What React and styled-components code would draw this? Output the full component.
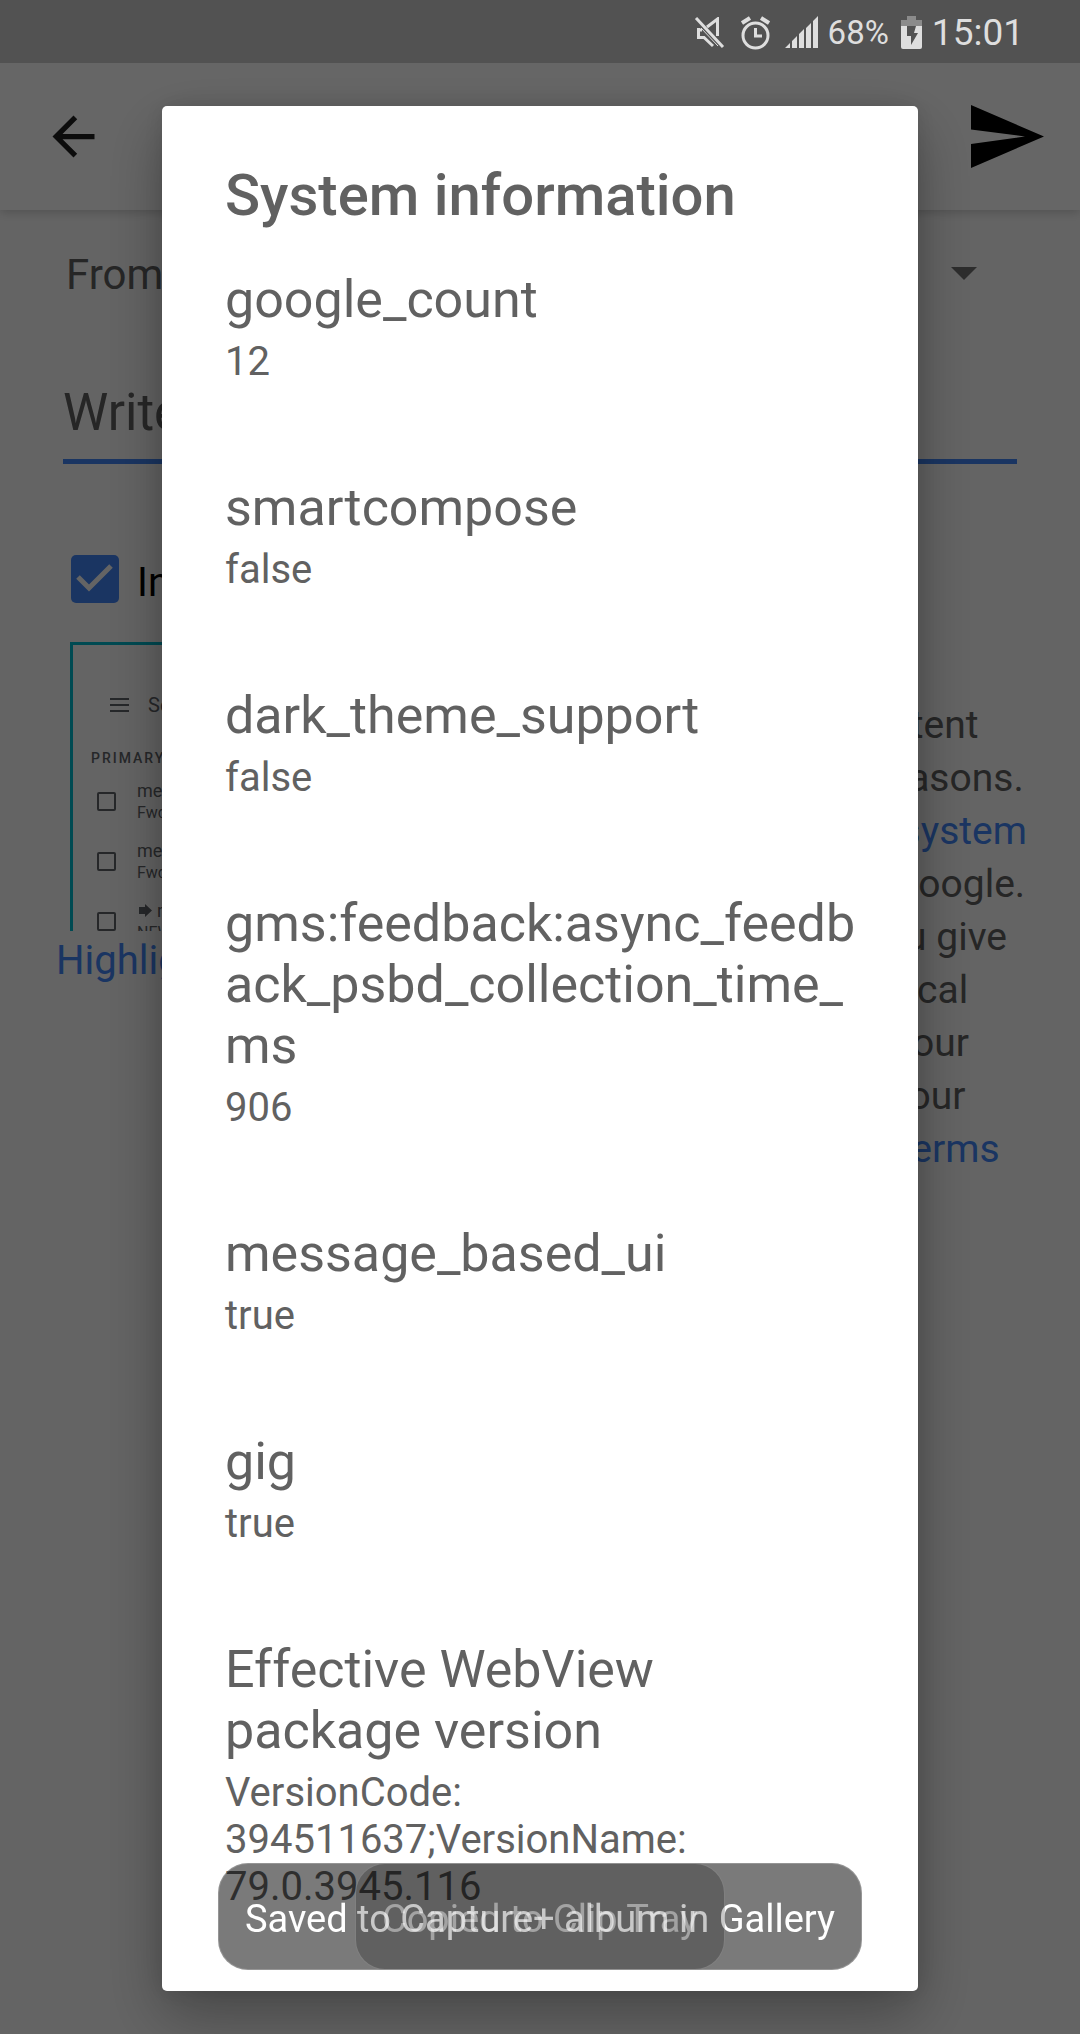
import React from "react";
import styled, { createGlobalStyle } from "styled-components";

const blue = "#4285f4";

const GlobalStyle = createGlobalStyle`
  *, *::before, *::after { box-sizing: border-box; }
  body { margin: 0; background: #fafafa; }
  body, button, input, textarea, select { font-family: Roboto, "Noto Sans", sans-serif; }
`;

const Screen = styled.div`
  min-height: 100vh;
  background: #fafafa;
`;

const StatusBar = styled.header`
  position: relative;
  z-index: 3;
  display: flex;
  align-items: center;
  justify-content: flex-end;
  height: 63px;
  padding: 2px 56px 0 0;
  background: #525252;
  color: #dedede;
  line-height: 42px;
`;

const StatusIcon = styled.svg`
  display: block;
  flex: none;
  margin-right: ${(p) => p.$gap}px;
`;

const Battery = styled.span`
  font-size: 33px;
  margin-right: 12px;
`;

const Clock = styled.time`
  font-size: 37px;
`;

const Toolbar = styled.div`
  position: relative;
  display: flex;
  align-items: center;
  justify-content: space-between;
  height: 147px;
  padding: 0 36px 0 42px;
  background: #ffffff;
  box-shadow: 0 2px 10px rgba(0, 0, 0, 0.2);
`;

const IconButton = styled.button`
  display: block;
  padding: 0;
  border: 0;
  background: none;
  color: ${(p) => p.$color};
  svg { display: block; }
`;

const Form = styled.main`
  display: flex;
  flex-direction: column;
`;

const FromRow = styled.div`
  display: flex;
  align-items: center;
  height: 126px;
  padding: 0 103px 0 66px;
`;

const FromSelect = styled.select`
  flex: 1;
  min-width: 0;
  padding: 4px 0 0;
  border: 0;
  appearance: none;
  background: transparent;
  color: #606060;
  font-size: 42px;
  line-height: 50px;
`;

const Caret = styled.span`
  width: 0;
  height: 0;
  border: 13px solid transparent;
  border-top-color: #707070;
  border-bottom-width: 0;
`;

const Feedback = styled.textarea`
  display: block;
  height: 94px;
  margin: 34px 63px 0;
  padding: 13px 0 0;
  border: 0;
  border-bottom: 5px solid ${blue};
  background: transparent;
  font-size: 51px;
  line-height: 60px;
  resize: none;
  overflow: hidden;
  &::placeholder { color: #606060; opacity: 1; }
`;

const CheckRow = styled.label`
  display: flex;
  align-items: center;
  gap: 18px;
  margin: 91px 63px 0 71px;
  color: #000;
  font-size: 40px;
  line-height: 48px;
`;

const CheckText = styled.span`
  padding-top: 4px;
  margin-bottom: -4px;
`;

const Tick = styled.span`
  position: relative;
  width: 48px;
  height: 48px;
  svg { position: absolute; inset: 0; pointer-events: none; }
`;

const TickInput = styled.input`
  appearance: none;
  display: block;
  width: 48px;
  height: 48px;
  margin: 0;
  border-radius: 5px;
  background: ${blue};
`;

const Details = styled.section`
  display: flex;
  align-items: flex-start;
  margin: 39px 50px 0 56px;
`;

const Preview = styled.div`
  flex: 0 0 52%;
  display: flex;
  flex-direction: column;
  align-items: flex-start;
`;

const Shot = styled.div`
  width: 460px;
  height: 289px;
  margin-left: 14px;
  padding-top: 42px;
  border: 3px solid #00b8cc;
  border-bottom: 0;
  overflow: hidden;
  color: #5f6368;
`;

const ShotSearch = styled.div`
  display: flex;
  align-items: center;
  gap: 19px;
  padding-left: 37px;
  font-size: 20px;
  line-height: 36px;
`;

const ShotHeading = styled.div`
  padding: 25px 0 9px 18px;
  font-size: 14px;
  font-weight: 500;
  line-height: 20px;
  letter-spacing: 2px;
`;

const ShotMail = styled.div`
  display: flex;
  gap: 21px;
  height: 60px;
  padding: 3px 0 0 24px;
`;

const ShotBox = styled.span`
  width: 19px;
  height: 19px;
  margin-top: 12px;
  border: 2px solid #5f6368;
  border-radius: 2px;
`;

const ShotText = styled.div`
  font-size: ${(p) => (p.$small ? 16 : 18)}px;
  line-height: 22px;
  white-space: nowrap;
`;

const Link = styled.a`
  color: ${blue};
  text-decoration: none;
`;

const HighlightLink = styled(Link)`
  margin-top: 5px;
  font-size: 40px;
  line-height: 50px;
`;

const Legal = styled.p`
  flex: 1;
  margin: 4px 0 0;
  padding-left: 4px;
  color: #606060;
  font-size: 39px;
  line-height: 53px;
  white-space: nowrap;
`;

const Line = styled.span`
  display: block;
`;

const Scrim = styled.div`
  position: fixed;
  inset: 0;
  z-index: 2;
  display: flex;
  justify-content: center;
  padding: 106px 15% 43px;
  background: rgba(0, 0, 0, 0.6);
`;

const Dialog = styled.div`
  flex: 1;
  padding: 55px 58px 0 63px;
  border-radius: 5px;
  background: #fff;
  color: #616161;
  box-shadow: 0 24px 60px rgba(0, 0, 0, 0.3), 0 0 24px rgba(0, 0, 0, 0.12);
  overflow: auto;
  scrollbar-width: none;
`;

const Title = styled.h1`
  margin: 0 0 40px;
  font-size: 58px;
  font-weight: 500;
  line-height: 68px;
`;

const Entries = styled.dl`
  margin: 0;
`;

const Entry = styled.div`
  padding-bottom: 92px;
`;

const Key = styled.dt`
  font-size: 52px;
  line-height: 61px;
  overflow-wrap: anywhere;
`;

const Value = styled.dd`
  margin: 8px 0 0;
  font-size: 40px;
  line-height: 47px;
`;

const ToastLayer = styled.div`
  position: fixed;
  inset: auto 0 64px;
  z-index: 4;
  display: grid;
  justify-items: center;
`;

const Toast = styled.div`
  grid-area: 1 / 1;
  padding: 33px 26px 28px;
  border: 1px solid rgba(255, 255, 255, 0.2);
  border-radius: 30px;
  background: rgba(0, 0, 0, ${(p) => (p.$fading ? 0.215 : 0.52)});
  color: rgba(255, 255, 255, ${(p) => (p.$fading ? 0.42 : 1)});
  font-size: 38px;
  line-height: 44px;
  white-space: nowrap;
`;

const entries = [
  ["google_count", "12"],
  ["smartcompose", "false"],
  ["dark_theme_support", "false"],
  ["gms:feedback:async_feedback_psbd_collection_time_ms", "906"],
  ["message_based_ui", "true"],
  ["gig", "true"],
  ["Effective WebView package version", "VersionCode: 394511637;VersionName: 79.0.3945.116"],
];

function StatusIcons() {
  return (
    <>
      <StatusIcon $gap={16} width="31" height="32" viewBox="0 0 31 32" fill="none" stroke="#dedede" strokeWidth="3">
        <path d="M2 1 L29 30" />
        <path d="M4.500 11 V20.500 H10 L19 29 M4.500 13 H8 M13 10 L23.500 2 V19" />
        <path d="M7 11 L24 29" strokeWidth="1" />
      </StatusIcon>
      <StatusIcon $gap={15} width="29" height="34" viewBox="0 0 29 34" fill="none" stroke="#dedede" strokeWidth="3">
        <circle cx="14.500" cy="19.500" r="12.500" />
        <path d="M1 7 L9 2 M28 7 L20 2" strokeWidth="4" />
        <path d="M14.500 12 V20 H21" />
      </StatusIcon>
      <StatusIcon $gap={10} width="33" height="33" viewBox="0 0 33 33" fill="#dedede">
        <path d="M0 32 L5 27 V32Z M7 25 L12 20 V32 H7Z M14 18 L19 13 V32 H14Z M21 12 L26 7 V32 H21Z M28 5 L33 0 V32 H28Z" />
      </StatusIcon>
    </>
  );
}

function BatteryIcon() {
  return (
    <StatusIcon $gap={10} width="21" height="34" viewBox="0 0 21 34">
      <path d="M6 0H15V4H21V11H0V4H6Z" fill="#8b8b8b" />
      <path d="M0 10H21V31Q21 33 19 33H2Q0 33 0 31Z" fill="#dedede" />
      <path d="M6 10H15L13 17H17L10 29L10 20H6Z" fill="#525252" />
    </StatusIcon>
  );
}

function MailPreview() {
  return (
    <Shot>
      <ShotSearch>
        <svg width="19" height="14" viewBox="0 0 19 14" stroke="#5f6368" strokeWidth="2">
          <path d="M0 1H19M0 7H19M0 13H19" />
        </svg>
        Search mail
      </ShotSearch>
      <ShotHeading>PRIMARY</ShotHeading>
      <ShotMail>
        <ShotBox />
        <div>
          <ShotText>me</ShotText>
          <ShotText $small>Fwd:</ShotText>
        </div>
      </ShotMail>
      <ShotMail>
        <ShotBox />
        <div>
          <ShotText>me</ShotText>
          <ShotText $small>Fwd:</ShotText>
        </div>
      </ShotMail>
      <ShotMail>
        <ShotBox />
        <div>
          <ShotText>
            <svg width="20" height="13" viewBox="0 0 20 13" fill="#5f6368">
              <path d="M2 3H8V0L15 6.500L8 13V10H2Z" />
            </svg>
            me
          </ShotText>
          <ShotText $small>NEW</ShotText>
        </div>
      </ShotMail>
    </Shot>
  );
}

export default function App() {
  return (
    <Screen>
      <GlobalStyle />
      <StatusBar>
        <StatusIcons />
        <Battery>68%</Battery>
        <BatteryIcon />
        <Clock>15:01</Clock>
      </StatusBar>
      <Toolbar>
        <IconButton $color="#202020" aria-label="Back">
          <svg width="63" height="63" viewBox="0 0 24 24" fill="currentColor">
            <path d="M20 11H7.830l5.590-5.590L12 4l-8 8 8 8 1.410-1.410L7.830 13H20v-2z" />
          </svg>
        </IconButton>
        <IconButton $color="#000" aria-label="Send">
          <svg width="73" height="63" viewBox="0 0 73 63" fill="currentColor">
            <path d="M0 0L73 31.500L0 63V39L54 31.500L0 24.500Z" />
          </svg>
        </IconButton>
      </Toolbar>
      <Form>
        <FromRow>
          <FromSelect aria-label="From">
            <option>From: me</option>
          </FromSelect>
          <Caret />
        </FromRow>
        <Feedback aria-label="Feedback" placeholder="Write your feedback" />
        <CheckRow>
          <Tick>
            <TickInput type="checkbox" defaultChecked />
            <svg width="48" height="48" viewBox="0 0 48 48" fill="none" stroke="#fafafa" strokeWidth="5">
              <path d="M7 22L18 33L40 11" />
            </svg>
          </Tick>
          <CheckText>Include screenshot and logs</CheckText>
        </CheckRow>
        <Details>
          <Preview>
            <MailPreview />
            <HighlightLink href="#highlight">Highlight or hide info</HighlightLink>
          </Preview>
          <Legal>
            <Line>Go to the <Link href="#legal">Legal Help</Link></Line>
            <Line>page to request content</Line>
            <Line>changes for legal reasons.</Line>
            <Line>Some <Link href="#system">account and system</Link></Line>
            <Line>info will be sent to Google.</Line>
            <Line>We will use what you give</Line>
            <Line>us to address technical</Line>
            <Line>issues and improve our</Line>
            <Line>services, subject to our</Line>
            <Line><Link href="#privacy">Privacy Policy</Link> and <Link href="#terms">Terms</Link></Line>
            <Line><Link href="#terms">of Service</Link>.</Line>
          </Legal>
        </Details>
      </Form>
      <Scrim>
        <Dialog role="dialog" aria-labelledby="dialog-title">
          <Title id="dialog-title">System information</Title>
          <Entries>
            {entries.map(([key, value]) => (
              <Entry key={key}>
                <Key>{key}</Key>
                <Value>{value}</Value>
              </Entry>
            ))}
          </Entries>
        </Dialog>
      </Scrim>
      <ToastLayer>
        <Toast role="status">Saved to Capture+ album in Gallery</Toast>
        <Toast role="status" $fading>Copied to Clip Tray</Toast>
      </ToastLayer>
    </Screen>
  );
}
